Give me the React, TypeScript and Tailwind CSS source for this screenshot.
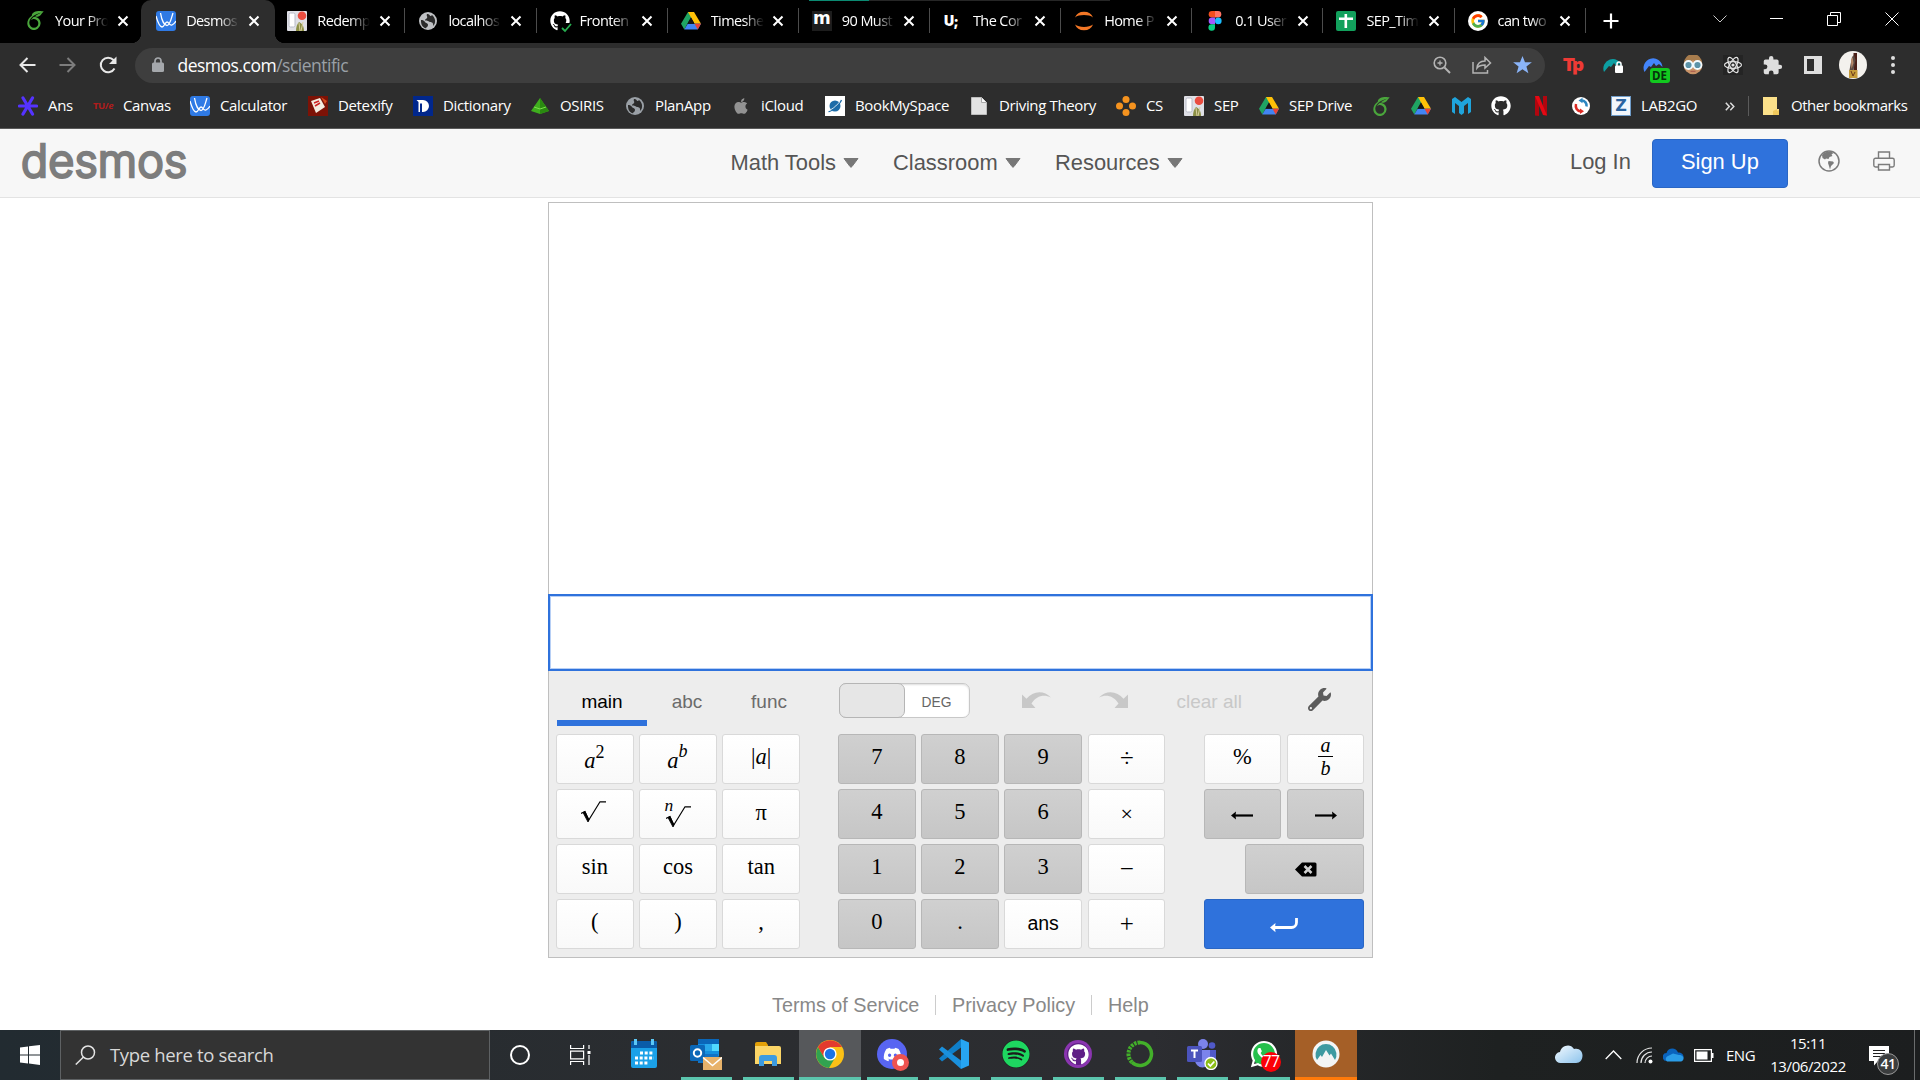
import React from "react";
import { FaApple, FaDiscord, FaGithub, FaSpotify, FaWhatsapp, FaWrench } from "react-icons/fa";
import { FcGoogle } from "react-icons/fc";
import { SiOverleaf } from "react-icons/si";

type Node = React.ReactNode;

/* ---------- favicons and small marks ---------- */

const DesmosIcon = () => (
  <svg width="20" height="20" viewBox="0 0 20 20">
    <rect width="20" height="20" rx="3" fill="#2f7ae5" />
    <path d="M0 5C2 12 3.500 16 6 16S9 11 11 11s2.500 4 5 3c2-1 3-2 4-4M4.500 2C5.500 8 8 14.500 11 14.500S15 8 17 2" fill="none" stroke="#fff" strokeWidth="1.300" />
  </svg>
);

const Leaf = () => <SiOverleaf className="h-[19px] w-[19px] text-[#4aa63c]" />;

const TrelloPhoto = () => (
  <svg width="20" height="20" viewBox="0 0 20 20">
    <rect width="20" height="20" rx="1" fill="#dfe0e6" />
    <rect x="2" y="2" width="6" height="14" rx="1.500" fill="#fff" stroke="#b9bcc8" />
    <path d="M9 20c0-4 1-7 3-9 2 1 5 3 5 9z" fill="#8b8f45" />
    <path d="M12 12l1 8M16 11l-2 9" stroke="#d9d0a0" />
    <circle cx="15" cy="4.700" r="4.300" fill="#ea4c3f" />
  </svg>
);

const Globe = ({ c = "#bfc1c4" }: { c?: string }) => (
  <svg width="18" height="18" viewBox="0 0 18 18">
    <circle cx="9" cy="9" r="9" fill={c} />
    <path d="M2 8c2 0 3 .5 4 2s3 1 3 3-2 2-2 3.300C3.500 15.500 1.800 12.500 2 8zM8 2c-1 2 1 2.500 0 4s-2 1-2 2 3 .5 4 1.500 2 .5 3 1 1.500 2 1 3.500C17 11.500 17 6 13 3c-1 1.500-2 1-2.500 0S9 2 8 2z" fill="#2b2b2b" />
  </svg>
);

const GithubCheck = () => (
  <span className="relative block h-5 w-5">
    <FaGithub className="h-5 w-5 text-white" />
    <svg className="absolute -right-0.5 -bottom-0.5" width="12" height="10" viewBox="0 0 12 10">
      <rect width="12" height="10" fill="#000" />
      <path d="M2 5l3 3 6-7" fill="none" stroke="#27ae50" strokeWidth="1.800" />
    </svg>
  </span>
);

const Drive = () => (
  <svg width="20" height="18" viewBox="0 0 20 18">
    <path d="M7 0h6L6.500 11.500 3.300 17.500 0 11.800z" fill="#1fa463" />
    <path d="M7 0h6l7 11.800h-6.500z" fill="#ffc107" />
    <path d="M6.700 11.800H20l-3.300 5.700H3.300z" fill="#4285f4" />
    <path d="M13.500 11.800H20l-3.300 5.700z" fill="#ea4335" />
    <path d="M10 5.500l3.500 6.300h-7z" fill="#151515" />
  </svg>
);

const MediumM = () => (
  <span className="flex h-5 w-5 items-center justify-center bg-[#1d1d1d] pb-1 font-['DejaVu_Sans'] text-[17px] leading-none font-bold text-white">m</span>
);
const Udacity = () => (
  <span className="flex h-5 w-5 items-center pl-px font-['Inter'] text-[14px] leading-none font-black tracking-tighter text-white">U;</span>
);
const Jupyter = () => (
  <svg width="20" height="20" viewBox="0 0 20 20">
    <path d="M1 6.500a9.500 8.500 0 0 1 18 0C15 3.300 5 3.300 1 6.500zM1 13.500a9.500 8.500 0 0 0 18 0C15 16.700 5 16.700 1 13.500z" fill="#f37726" />
  </svg>
);
const Figma = () => (
  <svg width="20" height="20" viewBox="0 0 20 20">
    <path d="M10 0H7a3.300 3.300 0 0 0 0 6.600h3z" fill="#f24e1e" />
    <path d="M10 0h3a3.300 3.300 0 0 1 0 6.600h-3z" fill="#ff7262" />
    <path d="M10 6.600H7a3.300 3.300 0 0 0 0 6.600h3z" fill="#a259ff" />
    <circle cx="13.300" cy="9.900" r="3.300" fill="#1abcfe" />
    <path d="M7 13.200h3v3.400A3.300 3.300 0 1 1 7 13.200z" fill="#0acf83" />
  </svg>
);
const Sheets = () => (
  <svg width="20" height="20" viewBox="0 0 20 20">
    <rect width="20" height="20" rx="2" fill="#12a05c" />
    <path d="M9.800 3v14M3 7.800h14" stroke="#fff" strokeWidth="2.600" />
  </svg>
);
const GoogleG = () => (
  <span className="flex h-5 w-5 items-center justify-center rounded-full bg-white">
    <FcGoogle className="h-4 w-4" />
  </span>
);

const CloseX = () => (
  <svg width="12" height="12" viewBox="0 0 12 12">
    <path d="M1.500 1.500l9 9M10.500 1.500l-9 9" stroke="#fff" strokeWidth="2" />
  </svg>
);

/* ---------- browser tab strip ---------- */

const tabs: { icon: Node; title: string }[] = [
  { icon: <Leaf />, title: "Your Pro" },
  { icon: <DesmosIcon />, title: "Desmos" },
  { icon: <TrelloPhoto />, title: "Redemp" },
  { icon: <Globe />, title: "localhos" },
  { icon: <GithubCheck />, title: "Fronten" },
  { icon: <Drive />, title: "Timeshe" },
  { icon: <MediumM />, title: "90 Must" },
  { icon: <Udacity />, title: "The Cor" },
  { icon: <Jupyter />, title: "Home P" },
  { icon: <Figma />, title: "0.1 User" },
  { icon: <Sheets />, title: "SEP_Tim" },
  { icon: <GoogleG />, title: "can two" },
];

function TabStrip() {
  return (
    <div className="relative flex h-[43px] bg-black pl-3">
      <div className="absolute top-0 left-[809px] flex h-px w-[301px] bg-[#262626]">
        <div className="h-px w-[60px] bg-[#0b8a72]" />
      </div>
      {tabs.map((t, i) => {
        const active = i === 1;
        return (
          <div key={t.title} className="relative flex h-[43px] w-[131.150px] shrink-0 items-center pb-0.5">
            {active && (
              <>
                <div className="absolute top-0 -left-0.5 h-[43px] w-[134px] rounded-t-[10px] bg-[#2d2d2d]" />
                <div className="absolute bottom-0 -left-3 h-2.5 w-2.5 bg-[radial-gradient(circle_at_top_left,transparent_10px,#2d2d2d_10.500px)]" />
                <div className="absolute -right-[11px] bottom-0 h-2.5 w-2.5 bg-[radial-gradient(circle_at_top_right,transparent_10px,#2d2d2d_10.500px)]" />
              </>
            )}
            <span className="relative ml-[13px] flex h-5 w-5 items-center justify-center">{t.icon}</span>
            <span className="relative ml-[10px] w-[53px] text-[14.500px] leading-5 tracking-[-0.600px] whitespace-nowrap text-white [mask-image:linear-gradient(to_right,#000_62%,transparent_100%)]">
              {t.title}
            </span>
            <span className="relative ml-[8.500px]">
              <CloseX />
            </span>
            {i > 1 && <span className="absolute right-0 h-[25px] w-px bg-[#4c4c4c]" />}
          </div>
        );
      })}
      <div className="flex w-[51px] items-center justify-center pb-px">
        <svg width="16" height="16" viewBox="0 0 16 16">
          <path d="M8 .5v15M.5 8h15" stroke="#fff" strokeWidth="2.200" />
        </svg>
      </div>
      <div className="ml-auto flex h-[37px] items-center">
        <div className="flex w-[57px] justify-center">
          <svg width="14" height="8" viewBox="0 0 14 8"><path d="M.5.5l6.500 6.500L13.500.5" fill="none" stroke="#c8c8c8" /></svg>
        </div>
        <div className="flex w-[57px] justify-center">
          <div className="h-px w-[13px] bg-white" />
        </div>
        <div className="flex w-[58px] justify-center">
          <svg width="14" height="14" viewBox="0 0 14 14"><path d="M.5 3.500h10v10h-10zM3.500 3V.5h10v10h-3" fill="none" stroke="#fff" /></svg>
        </div>
        <div className="flex w-[57px] justify-center">
          <svg width="14" height="14" viewBox="0 0 14 14"><path d="M.5.5l13 13M13.500.5l-13 13" stroke="#fff" /></svg>
        </div>
      </div>
    </div>
  );
}

/* ---------- address bar ---------- */

const extensions: Node[] = [
  <span className="font-['Inter'] text-[18px] leading-none font-black tracking-[-1.800px] text-[#ee3a35]">Tp</span>,
  <svg width="20" height="20" viewBox="0 0 20 20">
    <path d="M1 17A9.500 9.500 0 1 1 19 11l-3-2-3 2-2-3-3 4-2-1z" fill="#0d9fa3" />
    <rect x="12" y="10.500" width="8" height="7.500" rx="1" fill="#fff" />
    <path d="M14 11V9a2 2 0 0 1 4 0v2" fill="none" stroke="#fff" strokeWidth="1.500" />
  </svg>,
  <span className="relative block h-5 w-5">
    <svg width="20" height="20" viewBox="0 0 20 20">
      <path d="M1.500 17A9.500 9.500 0 1 1 19.500 12l-3.500-3-3 2-2-3-3 4-2-1z" fill="#4385fb" />
    </svg>
    <span className="absolute top-[13px] left-[7px] flex h-[15px] w-5 items-center justify-center rounded-[3px] bg-[#12c91f] text-[11.500px] leading-none font-bold text-[#06320b]">DE</span>
  </span>,
  <svg width="20" height="20" viewBox="0 0 20 20">
    <circle cx="10" cy="10" r="9.300" fill="#c99368" />
    <path d="M1 8a9 9 0 0 1 18 0c-4 0-6-1-9-3-3 2-5 3-9 3z" fill="#a77c4d" />
    <circle cx="5.500" cy="10" r="4" fill="#5c93a8" stroke="#f3fbff" strokeWidth="1.800" />
    <circle cx="14.500" cy="10" r="4" fill="#5c93a8" stroke="#f3fbff" strokeWidth="1.800" />
    <path d="M7.500 16.300h5" stroke="#a8554a" />
  </svg>,
  <svg width="20" height="20" viewBox="0 0 20 20" className="bg-[#242424]">
    <g fill="none" stroke="#e4e4e4" strokeWidth="1.200">
      <ellipse cx="10" cy="10" rx="8.500" ry="3.300" />
      <ellipse cx="10" cy="10" rx="8.500" ry="3.300" transform="rotate(60 10 10)" />
      <ellipse cx="10" cy="10" rx="8.500" ry="3.300" transform="rotate(120 10 10)" />
    </g>
    <circle cx="10" cy="10" r="1.600" fill="#e4e4e4" />
  </svg>,
  <svg width="21" height="21" viewBox="0 0 24 24" fill="#dedede">
    <path d="M20.500 11H19V7a2 2 0 0 0-2-2h-4V3.500a2.500 2.500 0 0 0-5 0V5H4a2 2 0 0 0-2 2v3.800h1.500a2.700 2.700 0 0 1 0 5.400H2V20a2 2 0 0 0 2 2h3.800v-1.500a2.700 2.700 0 0 1 5.400 0V22H17a2 2 0 0 0 2-2v-4h1.500a2.500 2.500 0 0 0 0-5z" />
  </svg>,
  <svg width="18" height="18" viewBox="0 0 18 18">
    <path d="M0 0h18v18H0zM3 3v12h7V3z" fill="#dedede" fillRule="evenodd" />
  </svg>,
  <svg width="28" height="28" viewBox="0 0 28 28">
    <circle cx="14" cy="14" r="14" fill="#f3f1ed" />
    <path d="M14.500 2H18v17h-3.500z" fill="#4b1f17" />
    <path d="M10.500 19L13 6l2-2 1.500 5-2 10z" fill="#5b4b44" />
    <path d="M12 9l1.500-3 1 6-2 6z" fill="#b98a6a" />
    <path d="M10 19h8.500v8H10z" fill="#c59b3a" />
    <path d="M12 20l2 5 2-4" stroke="#6b3a1c" fill="none" />
  </svg>,
  <svg width="4" height="18" viewBox="0 0 4 18" fill="#dedede">
    <circle cx="2" cy="2" r="2" /><circle cx="2" cy="9" r="2" /><circle cx="2" cy="16" r="2" />
  </svg>,
];

function AddressBar() {
  return (
    <div className="flex h-[45px] items-center bg-[#2d2d2d] pb-px pl-[7px]">
      <div className="flex w-10 justify-center">
        <svg width="17" height="16" viewBox="0 0 17 16"><path d="M16.500 8H1.500M8.500 1L1.500 8l7 7" fill="none" stroke="#e8e8e8" strokeWidth="2" /></svg>
      </div>
      <div className="flex w-10 justify-center">
        <svg width="17" height="16" viewBox="0 0 17 16"><path d="M.5 8h15M8.500 1l7 7-7 7" fill="none" stroke="#7d7d7d" strokeWidth="2" /></svg>
      </div>
      <div className="flex w-10 justify-center pl-px">
        <svg width="18" height="18" viewBox="0 0 18 18">
          <path d="M15.500 12.500A7.300 7.300 0 1 1 14.500 4L16 6" fill="none" stroke="#e8e8e8" strokeWidth="2" />
          <path d="M17.500.5v7.500H10z" fill="#e8e8e8" />
        </svg>
      </div>
      <div className="ml-2 flex h-[35px] w-[1410px] items-center rounded-full bg-[#3e3e3e]">
        <svg className="ml-[17px]" width="12" height="16" viewBox="0 0 12 16">
          <rect y="5.500" width="12" height="9.500" rx="1.500" fill="#a5a8ac" />
          <path d="M3 6V4a3 3 0 0 1 6 0v2" fill="none" stroke="#a5a8ac" strokeWidth="1.700" />
        </svg>
        <span className="ml-[13.500px] pb-px text-[17.500px] leading-6 tracking-[-0.500px] text-white">
          desmos.com<span className="text-[#9aa0a6]">/scientific</span>
        </span>
        <div className="mr-[3px] ml-auto flex">
          <div className="flex w-10 items-center justify-center">
            <svg width="18" height="18" viewBox="0 0 18 18" fill="none" stroke="#b4b4b4" strokeWidth="1.600">
              <circle cx="7" cy="7" r="5.800" /><path d="M11.500 11.500L17 17" strokeWidth="2" /><path d="M7 4.500v5M4.500 7h5" strokeWidth="1.300" />
            </svg>
          </div>
          <div className="flex w-10 items-center justify-center">
            <svg width="20" height="18" viewBox="0 0 20 18" fill="none" stroke="#b4b4b4" strokeWidth="1.500">
              <path d="M1 6v11h14.500v-3" /><path d="M5 12c.5-5 4-7 8-7V1.500L18.500 7 13 12V9c-3 0-6 .5-8 3z" />
            </svg>
          </div>
          <div className="flex w-10 items-center justify-center">
            <svg width="19" height="18" viewBox="0 0 24 23" fill="#8ab4f8"><path d="M12 0l3.200 8H24l-7 5.500L19.500 22 12 17l-7.500 5L7 13.500 0 8h8.800z" /></svg>
          </div>
        </div>
      </div>
      <div className="ml-[7.500px] flex">
        {extensions.map((e, i) => (
          <div key={i} className="flex w-10 items-center justify-center">{e}</div>
        ))}
      </div>
    </div>
  );
}

/* ---------- bookmarks ---------- */

const bookmarks: { icon: Node; label?: string; w: string }[] = [
  {
    icon: (
      <svg width="20" height="20" viewBox="0 0 20 20" stroke="#5533ff" strokeWidth="3.200" strokeLinecap="round">
        <path d="M1.500 10h17M5 2l9.500 16M14.500 2L5 18" />
      </svg>
    ),
    label: "Ans",
    w: "w-[75px]",
  },
  { icon: <span className="text-[9.500px] leading-none font-bold tracking-[-0.500px] text-[#b01c1c]">TU/<i>e</i></span>, label: "Canvas", w: "w-[97px]" },
  { icon: <DesmosIcon />, label: "Calculator", w: "w-[118px]" },
  {
    icon: (
      <svg width="20" height="20" viewBox="0 0 20 20">
        <rect width="20" height="20" fill="#7c1206" />
        <path d="M3 5l9-3 5 9-9 6z" fill="#f3ece0" />
        <path d="M6 7l5-2M7 10l5-3" stroke="#c22" strokeWidth="1.500" />
        <path d="M13 1l6 4-2 3z" fill="#d34a1f" />
      </svg>
    ),
    label: "Detexify",
    w: "w-[105px]",
  },
  {
    icon: (
      <svg width="20" height="20" viewBox="0 0 20 20">
        <rect width="20" height="20" fill="#01278c" />
        <path d="M3.500 4h6.500a6 6 0 0 1 0 12H9V7.500H7V16H5.500V6z" fill="#fff" />
      </svg>
    ),
    label: "Dictionary",
    w: "w-[117px]",
  },
  {
    icon: (
      <svg width="20" height="18" viewBox="0 0 20 18">
        <path d="M10 1l9 13-9 3-9-3z" fill="#3fae1e" /><path d="M10 1l9 13-9 3z" fill="#2a8a10" /><path d="M4 10l6 2 6-2" stroke="#7be04a" fill="none" />
      </svg>
    ),
    label: "OSIRIS",
    w: "w-[95px]",
  },
  { icon: <Globe c="#9aa0a6" />, label: "PlanApp", w: "w-[106px]" },
  { icon: <FaApple className="h-[18px] w-[18px] text-[#929292]" />, label: "iCloud", w: "w-[94px]" },
  {
    icon: (
      <svg width="20" height="20" viewBox="0 0 20 20">
        <rect width="20" height="20" fill="#fff" />
        <circle cx="10" cy="10" r="5.500" fill="#1d6ca8" /><path d="M3.500 15.500C6 16.500 15 8 16.500 4" fill="none" stroke="#1d6ca8" strokeWidth="1.300" /><path d="M6 13.500C9 12 13 8 14.500 6" stroke="#fff" fill="none" strokeWidth=".8" />
      </svg>
    ),
    label: "BookMySpace",
    w: "w-[144px]",
  },
  {
    icon: (
      <svg width="16" height="18" viewBox="0 0 16 18"><path d="M.5.5h10l5 5v12H.5z" fill="#e3e3e3" stroke="#bdbdbd" /><path d="M10.500.5v5h5" fill="#fafafa" stroke="#aaa" /></svg>
    ),
    label: "Driving Theory",
    w: "w-[147px]",
  },
  {
    icon: (
      <svg width="20" height="20" viewBox="0 0 20 20" fill="#f5931f"><circle cx="10" cy="3.500" r="3.500" /><circle cx="10" cy="16.500" r="3.500" /><circle cx="3.500" cy="10" r="3.500" /><circle cx="16.500" cy="10" r="3.500" /></svg>
    ),
    label: "CS",
    w: "w-[68px]",
  },
  { icon: <TrelloPhoto />, label: "SEP", w: "w-[75px]" },
  { icon: <Drive />, label: "SEP Drive", w: "w-[112px]" },
  { icon: <Leaf />, w: "w-[40px]" },
  { icon: <Drive />, w: "w-[40px]" },
  {
    icon: (
      <svg width="19" height="18" viewBox="0 0 19 18"><path d="M0 2l3-2 6.500 5L16 0l3 2v13l-3 2V6l-4 3v7l-2.500 2L7 16V9L3 6v11l-3-2z" fill="#1fa4dc" /></svg>
    ),
    w: "w-[40px]",
  },
  { icon: <FaGithub className="h-5 w-5 text-white" />, w: "w-[40px]" },
  {
    icon: (
      <svg width="12" height="20" viewBox="0 0 12 20"><path d="M0 0h4v20l-4-.5zM8 0h4v19.500L8 19z" fill="#b1060f" /><path d="M0 0h4l8 19.500-4-.5z" fill="#e50914" /></svg>
    ),
    w: "w-[40px]",
  },
  {
    icon: (
      <svg width="18" height="18" viewBox="0 0 18 18">
        <circle cx="9" cy="9" r="9" fill="#fff" />
        <path d="M9.500 3.500c3.500 0 5.500 3 5 6" fill="none" stroke="#2b86c0" strokeWidth="2.500" /><path d="M10.500.8v5.500l-4-2.700z" fill="#2b86c0" />
        <path d="M4 7c-1 4 1 7 5 7.500" fill="none" stroke="#dd2a23" strokeWidth="2.500" /><path d="M8 11.500v5.500l4-2.700z" fill="#dd2a23" />
      </svg>
    ),
    w: "w-[40px]",
  },
  { icon: <span className="flex h-5 w-5 items-center justify-center border border-[#6f9cc9] bg-[#f2f6fb] font-['DejaVu_Sans'] text-[16px] leading-none font-bold text-[#2c64a0]">Z</span>, label: "LAB2GO", w: "w-[114px]" },
];

function Bookmarks() {
  return (
    <div className="flex h-10 items-center bg-[#2d2d2d] pb-1 pl-[18px] text-[15px] tracking-[-0.350px] text-white">
      {bookmarks.map((b, i) => (
        <div key={i} className={`flex shrink-0 items-center whitespace-nowrap ${b.w}`}>
          <span className="flex h-5 w-5 shrink-0 items-center justify-center">{b.icon}</span>
          {b.label && <span className="-mt-0.5 ml-2.5 leading-5">{b.label}</span>}
        </div>
      ))}
      <svg width="10" height="9" viewBox="0 0 10 9"><path d="M.8.8l3.500 3.700L.8 8.200M5.300.8l3.500 3.700-3.500 3.700" fill="none" stroke="#ddd" strokeWidth="1.500" /></svg>
      <span className="ml-[13px] h-5 w-px bg-[#5b5b5b]" />
      <svg className="ml-[14px]" width="17" height="19" viewBox="0 0 17 19"><path d="M0 0h14v12h2v6H0z" fill="#fbe08a" /><path d="M10 18v-4l4-2v2l2-1v5z" fill="#f0c95c" /></svg>
      <span className="-mt-0.5 ml-[11px] leading-5 tracking-[-0.450px] whitespace-nowrap">Other bookmarks</span>
    </div>
  );
}

/* ---------- site header ---------- */

const NavItem = ({ label, w }: { label: string; w: string }) => (
  <div className={`flex items-center ${w}`}>
    <span>{label}</span>
    <svg className="ml-[7px]" width="16" height="10" viewBox="0 0 16 10"><path d="M1 .5h14L9 8.500a1.200 1.200 0 0 1-2 0z" fill="#777" stroke="#777" strokeLinejoin="round" /></svg>
  </div>
);

function SiteHeader() {
  return (
    <header className="flex h-[69px] items-center border-b border-[#e3e3e3] bg-[#f7f7f7] font-['Liberation_Sans',sans-serif] text-[21.900px] text-[#555]">
      <div className="ml-[21px] w-[709.500px] pb-1.5 font-['Inter'] text-[45px] leading-none font-light tracking-[0.150px] text-[#7d7d7d] [-webkit-text-stroke:2.500px_#7d7d7d] [stroke-linejoin:round]">desmos</div>
      <nav className="flex whitespace-nowrap">
        <NavItem label="Math Tools" w="w-[162.500px]" />
        <NavItem label="Classroom" w="w-[162px]" />
        <NavItem label="Resources" w="w-[140px]" />
      </nav>
      <span className="ml-[375px] pb-0.5 whitespace-nowrap">Log In</span>
      <button className="ml-[21px] flex h-[49px] w-[136px] items-center justify-center rounded-[4px] border border-[#2a66c4] bg-[#2f72dc] pb-0.5 text-white">Sign Up</button>
      <svg className="mb-1 ml-[30px]" width="22" height="22" viewBox="0 0 22 22">
        <circle cx="11" cy="11" r="10" fill="none" stroke="#7b7b7b" strokeWidth="1.500" />
        <path d="M4 5c2-3 6-4 9-3.500l2.500 1.500-2 1.500 1 1.500-3 1-1 2-2.500-.5-1 1L4.500 8zM10.500 11l4.500.5 1 1.500-3 3-1 3.500-1-3.500-1-3z" fill="#7b7b7b" />
      </svg>
      <svg className="mb-1 ml-[33px]" width="22" height="20" viewBox="0 0 22 20" fill="none" stroke="#7b7b7b" strokeWidth="1.400">
        <path d="M5.500 7V1h11v6M5.500 16H2.500A1.700 1.700 0 0 1 .8 14.300V9A1.700 1.700 0 0 1 2.500 7.300h17A1.700 1.700 0 0 1 21.200 9v5.300a1.700 1.700 0 0 1-1.700 1.700h-3M5.500 13.500h11V19h-11z" />
      </svg>
    </header>
  );
}

/* ---------- calculator ---------- */

const keyTone = {
  light: "border-[#d9d9d9] bg-linear-to-b from-white to-[#f9f9f9]",
  grey: "border-[#b7b7b7] bg-linear-to-b from-[#d0d0d0] to-[#c6c6c6]",
  blue: "border-[#2a66c4] bg-[#2f72dc]",
};

const Key = ({ tone = "light", children, extra = "" }: { tone?: keyof typeof keyTone; children: Node; extra?: string }) => (
  <button className={`flex h-[50px] items-center justify-center rounded-[3px] border leading-none text-black ${keyTone[tone]} ${extra}`}>{children}</button>
);

const Up = ({ base, sup, italic }: { base: string; sup: string; italic?: boolean }) => (
  <span className="flex items-start pr-px">
    <i className="pt-[5px]">{base}</i>
    <span className={italic ? "-mt-[3px] text-[18px] italic" : "-mt-[2px] text-[18px]"}>{sup}</span>
  </span>
);

const Root = () => (
  <svg width="25" height="22" viewBox="0 0 25 22">
    <path d="M0 12.500l4-2 3.500 9L19 .8h6" fill="none" stroke="#000" strokeWidth="1.200" />
    <path d="M2 11.500L4 10.500l4 8-1 2.500z" fill="#000" stroke="#000" strokeWidth=".8" />
  </svg>
);

const Arrow = ({ flip }: { flip?: boolean }) => (
  <svg className={flip ? "mt-0.5 rotate-180" : "mt-0.5"} width="22" height="9" viewBox="0 0 22 9">
    <path d="M4 4.500h18" stroke="#000" strokeWidth="2.200" /><path d="M0 4.500L5 .5 4.500 4.500 5 8.500z" fill="#000" />
  </svg>
);

const Num = ({ n }: { n: string }) => (
  <Key tone="grey" extra="pb-[3px] text-[22.500px] text-[#1c1c1c]">{n}</Key>
);

const grid = "grid auto-rows-[50px] gap-x-[5.600px] gap-y-[5px] font-['Liberation_Serif',serif] text-[22.500px]";

function Calculator() {
  return (
    <main className="mt-1 ml-[548px] flex h-[756px] w-[825px] flex-col border border-[#bfbfbf] bg-white">
      <div className="flex-1" />
      <div className="-mx-px h-[77px] shrink-0 border-2 border-[#2f72dc] bg-white shadow-[inset_0_0_0_1px_#b7cff5]" />
      <div className="h-[286px] shrink-0 bg-[#ededed]">
        <div className="flex h-[63px] items-start pl-2 font-['Liberation_Sans',sans-serif] text-[19px] text-[#6b6b6b]">
          <div className="flex h-[55px] w-[90px] flex-col items-center justify-between">
            <span className="mt-[18px] leading-[26px] text-black">main</span>
            <div className="h-1.5 w-full bg-[#2f72dc]" />
          </div>
          <span className="mt-[18px] w-20 text-center leading-[26px]">abc</span>
          <span className="mt-[18px] w-[84px] text-center leading-[26px]">func</span>
          <div className="mt-3 ml-[27.500px] flex h-[35px] w-[131px] rounded-[7px] border border-[#c8c8c8] bg-white shadow-[inset_0_1px_2px_#ddd]">
            <div className="-my-px -ml-px w-[66px] rounded-[7px] border border-[#b5b5b5] bg-[#e6e6e6]" />
            <span className="flex flex-1 items-center justify-center pt-1.5 text-[13.800px] text-[#666]">DEG</span>
          </div>
          <svg className="mt-[21px] ml-[52px]" width="29" height="17" viewBox="0 0 29 17"><path d="M0 2.500l4.500 4.300C11-1.500 22-2 29 5.500 22 2 14.500 3.500 9.500 11.500L13.500 16H0z" fill="#c8c8c8" /></svg>
          <svg className="mt-[21px] ml-[48px]" width="29" height="17" viewBox="0 0 29 17"><path d="M29 2.500l-4.500 4.300C18-1.500 7-2 0 5.500 7 2 14.500 3.500 19.500 11.500L15.500 16H29z" fill="#c8c8c8" /></svg>
          <span className="mt-[18px] ml-[49px] leading-[26px] whitespace-nowrap text-[#c8c8c8]">clear all</span>
          <FaWrench className="mt-[17px] ml-[66px] h-[23px] w-[23px] text-[#5c5c5c]" />
        </div>
        <div className="flex pl-[7px]">
          <div className={`${grid} grid-cols-[77.600px_77.600px_77.600px]`}>
            <Key><Up base="a" sup="2" /></Key>
            <Key><Up base="a" sup="b" italic /></Key>
            <Key extra="pb-1">|<i>a</i>|</Key>
            <Key extra="pr-0.5 pb-1"><Root /></Key>
            <Key>
              <span className="relative pt-1.5 pl-0.5">
                <i className="absolute -top-[3px] left-0 text-[17.500px]">n</i>
                <Root />
              </span>
            </Key>
            <Key extra="pb-0.5">π</Key>
            <Key extra="pb-1">sin</Key>
            <Key extra="pb-1">cos</Key>
            <Key extra="pb-1">tan</Key>
            <Key extra="pb-1">(</Key>
            <Key extra="pb-1">)</Key>
            <Key extra="pb-1">,</Key>
          </div>
          <div className={`ml-[38px] ${grid} grid-cols-[77.600px_77.600px_77.600px_77.600px]`}>
            <Num n="7" /><Num n="8" /><Num n="9" />
            <Key extra="pb-px pl-px text-[25px]">÷</Key>
            <Num n="4" /><Num n="5" /><Num n="6" />
            <Key extra="pl-px text-[22px]">×</Key>
            <Num n="1" /><Num n="2" /><Num n="3" />
            <Key extra="pb-px pl-px text-[25px]">−</Key>
            <Num n="0" /><Num n="." />
            <Key extra="font-['Liberation_Sans',sans-serif] text-[19.500px]">ans</Key>
            <Key extra="pb-0.5 pl-px text-[25px]">+</Key>
          </div>
          <div className={`ml-[38.400px] ${grid} grid-cols-[36px_36px_77.600px]`}>
            <Key extra="col-span-2 pb-1">%</Key>
            <Key extra="pb-0.5">
              <span className="flex flex-col items-center text-[20px] italic">
                <span className="h-[17px] leading-[13px]">a</span>
                <span className="h-px w-[15px] bg-black" />
                <span className="h-5 leading-[23px]">b</span>
              </span>
            </Key>
            <Key tone="grey" extra="col-span-2"><Arrow /></Key>
            <Key tone="grey"><Arrow flip /></Key>
            <Key tone="grey" extra="col-span-2 col-start-2">
              <svg className="ml-0.5" width="22" height="15" viewBox="0 0 22 15">
                <path d="M0 7.500L7 .5h13a1.500 1.500 0 0 1 1.500 1.500v11a1.500 1.500 0 0 1-1.500 1.500H7z" fill="#000" />
                <path d="M9.500 4l7 7M16.500 4l-7 7" stroke="#d0d0d0" strokeWidth="2.500" />
              </svg>
            </Key>
            <Key tone="blue" extra="col-span-3">
              <svg className="mt-0.5" width="28" height="15" viewBox="0 0 28 15">
                <path d="M26.500 0v4.500a5 5 0 0 1-5 5H4" fill="none" stroke="#fff" strokeWidth="2.800" /><path d="M0 9.500L5.500 5l-.5 4.500.5 4.800z" fill="#fff" />
              </svg>
            </Key>
          </div>
        </div>
      </div>
    </main>
  );
}

function Footer() {
  return (
    <footer className="flex flex-1 items-start pt-[34px] pl-[772px] font-['Liberation_Sans',sans-serif] text-[19.800px] leading-[26px] whitespace-nowrap text-[#888]">
      <span className="w-[163px]">Terms of Service</span>
      <span className="mt-[3px] h-5 w-px bg-[#ccc]" />
      <span className="ml-4 w-[139px]">Privacy Policy</span>
      <span className="mt-[3px] h-5 w-px bg-[#ccc]" />
      <span className="ml-4">Help</span>
    </footer>
  );
}

/* ---------- taskbar ---------- */

const apps: { icon: Node; line: string; bg?: string }[] = [
  {
    icon: (
      <svg width="28" height="30" viewBox="0 0 28 30">
        <rect x="1" y="2" width="26" height="27" rx="2" fill="#1ba1e8" /><path d="M1 4a2 2 0 0 1 2-2h22a2 2 0 0 1 2 2v5H1z" fill="#0a5ca8" />
        <path d="M5.500 0v6M22.500 0v6" stroke="#5cc8f5" strokeWidth="3" />
        <path d="M10 14h14M5 19h19M5 24h13" stroke="#fff" strokeWidth="3" strokeDasharray="3 1.700" />
      </svg>
    ),
    line: "",
  },
  {
    icon: (
      <svg width="32" height="32" viewBox="0 0 32 32">
        <rect x="8" y="1" width="21" height="18" rx="1.500" fill="#1490df" /><path d="M15 6h7v7h-7z" fill="#28a8ea" /><path d="M22 6h7v7h-7z" fill="#50d9ff" /><path d="M8 1h21v5H8z" fill="#0a66b8" /><path d="M8 16h20v9H8z" fill="#1272c4" />
        <rect y="7" width="15" height="16" rx="1.500" fill="#0b68b8" /><circle cx="7.500" cy="15" r="3.700" fill="none" stroke="#fff" strokeWidth="2" />
        <path d="M13 19h19v13H13z" fill="#e8b26a" /><path d="M13 19.500l9.500 8L32 19.500" fill="none" stroke="#fff" strokeWidth="1.500" />
      </svg>
    ),
    line: "w-[51px] bg-[#5bc5ad]",
  },
  {
    icon: (
      <svg width="28" height="26" viewBox="0 0 28 26">
        <path d="M1 3a2 2 0 0 1 2-2h9l2 3v5H1z" fill="#e3a008" /><path d="M1 5h24a2 2 0 0 1 2 2v16H1z" fill="#fbd567" /><path d="M5 25v-8a3 3 0 0 1 3-3h12a3 3 0 0 1 3 3v8h-5v-5h-8v5z" fill="#3c9be0" />
      </svg>
    ),
    line: "w-[51px] bg-[#5bc5ad]",
  },
  {
    icon: (
      <svg width="28" height="28" viewBox="0 0 28 28">
        <circle cx="14" cy="14" r="14" fill="#fbc116" /><path d="M2 7a14 14 0 0 0 11 21l6.500-11L14 14 8 17z" fill="#31a350" /><path d="M14 7h12a14 14 0 0 0-24 0l5.900 10z" fill="#e33b2e" />
        <circle cx="14" cy="14" r="6.600" fill="#fff" /><circle cx="14" cy="14" r="5.200" fill="#1a73e8" />
      </svg>
    ),
    line: "w-full bg-[#5bc5ad]",
    bg: "bg-[#56585b]",
  },
  {
    icon: (
      <span className="relative flex h-[30px] w-[30px] items-center justify-center rounded-full bg-[#5865f2]">
        <FaDiscord className="h-[19px] w-[19px] text-white" />
        <span className="absolute -right-0.5 -bottom-0.5 flex h-[17px] w-[17px] items-center justify-center rounded-full bg-[#ef5350]">
          <span className="h-[7px] w-[7px] rounded-full bg-white" />
        </span>
      </span>
    ),
    line: "w-[51px] bg-[#5bc5ad]",
  },
  {
    icon: (
      <svg width="30" height="30" viewBox="0 0 30 30">
        <path d="M22 0l8 3.500v23L22 30z" fill="#27a5f2" /><path d="M22 0L0 19.500l3 3L22 8.500z" fill="#0f7fc9" /><path d="M22 30L0 10.500l3-3L22 21.500z" fill="#1a90dd" />
      </svg>
    ),
    line: "w-[51px] bg-[#5bc5ad]",
  },
  {
    icon: <span className="rounded-full bg-[#1b1b1b]"><FaSpotify className="h-7 w-7 text-[#1ed760]" /></span>,
    line: "w-[51px] bg-[#5bc5ad]",
  },
  {
    icon: (
      <span className="flex h-7 w-7 items-center justify-center rounded-full bg-[#8a35b0]">
        <span className="flex h-[22px] w-[22px] items-center justify-center rounded-full bg-[#5f1f86]"><FaGithub className="h-[21px] w-[21px] text-white" /></span>
      </span>
    ),
    line: "w-[51px] bg-[#5bc5ad]",
  },
  {
    icon: (
      <svg width="28" height="28" viewBox="0 0 28 28" fill="none" stroke="#43b02a">
        <path d="M14 2.500a11.500 11.500 0 1 1-8 19.800" strokeWidth="3.500" />
        <path d="M14 2.500A11.500 11.500 0 0 0 6 22.300" strokeWidth="4" strokeDasharray="2.500 1" />
      </svg>
    ),
    line: "w-[51px] bg-[#5bc5ad]",
  },
  {
    icon: (
      <svg width="32" height="32" viewBox="0 0 32 32">
        <circle cx="17" cy="6" r="5" fill="#7b83eb" /><circle cx="26" cy="7.500" r="3.300" fill="#5059c9" /><path d="M20 12h10v9a6 6 0 0 1-10 3z" fill="#5059c9" /><path d="M9 12h15v10a7.500 7.500 0 0 1-15 0z" fill="#7b83eb" />
        <rect x="1" y="8" width="15" height="16" rx="1.500" fill="#4b53bc" /><path d="M5 12.500h7M8.500 12.500V20" stroke="#fff" strokeWidth="2" />
        <circle cx="25" cy="25.500" r="6" fill="#8cbd18" stroke="#fff" strokeWidth="1.300" /><path d="M22 25.500l2.300 2.500 4-4.500" stroke="#fff" strokeWidth="1.800" fill="none" />
      </svg>
    ),
    line: "w-[51px] bg-[#5bc5ad]",
  },
  {
    icon: (
      <span className="relative flex h-7 w-7 items-center justify-center">
        <span className="absolute h-6 w-6 rounded-full bg-[#25c04c]" />
        <FaWhatsapp className="relative h-[30px] w-[30px] shrink-0 text-white" />
        <span className="absolute top-[12px] left-[11px] flex h-5 w-5 items-center justify-center rounded-full bg-[#fb0007] text-[15.500px] leading-none tracking-[-0.700px] text-white">77</span>
      </span>
    ),
    line: "w-[51px] bg-[#5bc5ad]",
  },
  {
    icon: (
      <svg width="28" height="28" viewBox="0 0 28 28">
        <circle cx="14" cy="14" r="13.500" fill="#f3f5f5" /><path d="M5 20a10.500 10.500 0 1 1 18 0l-4-6.500-1.500 2-3.500-5.500-4 7-1.500-2z" fill="#3d9aa1" />
      </svg>
    ),
    line: "w-full bg-[#ff7a0a]",
    bg: "bg-[#a55f27]",
  },
];

function Taskbar() {
  return (
    <div className="flex h-[50px] shrink-0 bg-[linear-gradient(to_right,#222b31_0%,#2b2d30_38%,#2c2d31_60%,#1e2121_78%,#1c1e1f_100%)] text-white">
      <div className="flex w-[60px] items-center justify-center">
        <svg width="20" height="20" viewBox="0 0 20 20" fill="#fff"><path d="M0 2.500l8-1v8H0zM9 1.300L20 0v9.500H9zM0 10.500h8v8l-8-1zM9 10.500h11V20L9 18.600z" /></svg>
      </div>
      <div className="flex w-[430px] items-center border border-[#5e6163] bg-[#333]">
        <svg className="ml-[14px]" width="21" height="20" viewBox="0 0 21 20" fill="none" stroke="#e4e4e4" strokeWidth="1.500"><circle cx="13" cy="7.500" r="6.500" /><path d="M8.500 12L.8 19.500" /></svg>
        <span className="ml-[14px] pb-px text-[18.500px] tracking-[-0.350px] text-[#d8d8d8]">Type here to search</span>
      </div>
      <div className="flex w-[60px] items-center justify-center">
        <div className="h-5 w-5 rounded-full border-[2.500px] border-white" />
      </div>
      <div className="flex w-[60px] items-center justify-center">
        <svg width="21" height="20" viewBox="0 0 21 20" fill="none" stroke="#fff" strokeWidth="1.200"><path d="M.6 0v3.500h13V0M.6 6.200h13v7.600H.6zM.6 20v-3.500h13V20M19 0v4M19 10v10" /><path d="M17.500 6h3v3h-3z" fill="#fff" stroke="none" /></svg>
      </div>
      <div className="ml-[3px] flex">
        {apps.map((a, i) => (
          <div key={i} className={`flex h-[50px] w-[62px] flex-col items-center ${a.bg ?? ""}`}>
            <div className="flex h-[47px] items-center justify-center pt-px">{a.icon}</div>
            <div className={`h-[3px] ${a.line}`} />
          </div>
        ))}
      </div>
      <div className="ml-auto flex items-center">
        <svg className="-mt-0.5" width="28" height="20" viewBox="0 0 28 20">
          <defs><linearGradient id="cloud" x1="0" y1="0" x2="1" y2="1"><stop offset="0" stopColor="#f4faff" /><stop offset="1" stopColor="#8cc3ec" /></linearGradient></defs>
          <path d="M6 19a5.500 5.500 0 0 1-1-11C6 2 15-1.500 19 5c5-1.500 8.500 2 8.500 6.500S25 19 21 19z" fill="url(#cloud)" />
        </svg>
        <svg className="ml-[22px]" width="17" height="10" viewBox="0 0 17 10"><path d="M.7 9l7.800-8 7.800 8" fill="none" stroke="#fff" strokeWidth="1.300" /></svg>
        <svg className="ml-[14px]" width="17" height="17" viewBox="0 0 17 17" fill="none" stroke="#e6e6e6" strokeWidth="1.200">
          <path d="M1 16A15 15 0 0 1 16 1M5 16A11 11 0 0 1 16 5M9 16a7 7 0 0 1 7-7" /><circle cx="14.500" cy="14.500" r="2" fill="#fff" stroke="none" />
        </svg>
        <svg className="ml-[10px]" width="21" height="14" viewBox="0 0 21 14"><path d="M4 13a4 4 0 0 1-.5-8C5-.5 13-1 15 4.500c4 0 6 2.500 5.500 5S18 13 17 13z" fill="#0a63bd" /><path d="M4 13.500a3.500 3.500 0 0 1 0-5l6-3 6 1.500c3 0 5 2 4.500 4s-2 2.500-3.500 2.500z" fill="#2b9de8" /></svg>
        <svg className="ml-[10px]" width="20" height="13" viewBox="0 0 20 13"><path d="M.6.6h16.800v11.800H.6z" fill="none" stroke="#fff" strokeWidth="1.200" /><path d="M2.500 2.500h11v8h-11zM18 4h1.500v5H18z" fill="#fff" /></svg>
        <span className="ml-[12px] w-[29px] text-[15px] tracking-[-0.500px]">ENG</span>
        <div className="ml-[10px] flex w-[86px] flex-col items-center text-[15px] leading-[23px] tracking-[-0.400px]">
          <span>15:11</span>
          <span>13/06/2022</span>
        </div>
        <div className="relative ml-[18px] h-[32px] w-[32px]">
          <svg className="mt-[3px]" width="32" height="32" viewBox="0 0 32 32">
            <path d="M0 4h20v15H9l-4 4.500V19H0z" fill="#fff" /><path d="M4 8.500h12M4 11.500h12M4 14.500h8" stroke="#222" strokeWidth="1.200" />
          </svg>
          <span className="absolute top-[14px] left-[8px] flex h-[22px] w-[22px] items-center justify-center rounded-full border border-[#999] bg-[#3b3d3e] text-[14px] leading-none font-semibold tracking-[-0.500px]">41</span>
        </div>
        <div className="ml-[13px] h-[50px] w-px bg-[#6a6c6d]" />
        <div className="w-[5px]" />
      </div>
    </div>
  );
}

export default function App() {
  return (
    <div className="flex h-[1080px] w-[1920px] flex-col overflow-hidden bg-white font-['Open_Sans','Noto_Sans',sans-serif]">
      <TabStrip />
      <AddressBar />
      <Bookmarks />
      <div className="h-px shrink-0 bg-[#5a5a5a]" />
      <SiteHeader />
      <Calculator />
      <Footer />
      <Taskbar />
    </div>
  );
}
